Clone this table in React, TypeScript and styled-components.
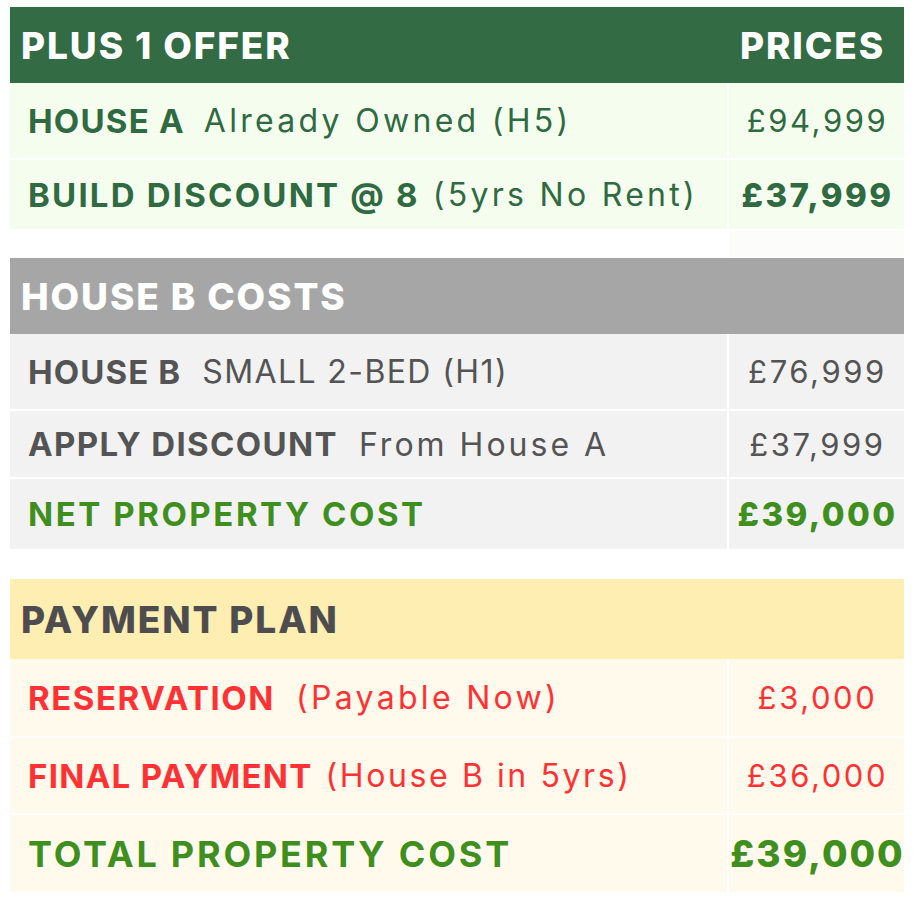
import React from "react";
import styled, { createGlobalStyle } from "styled-components";

type Tone = "green" | "grey" | "yellow";

const tones: Record<Tone, { head: string; headText: string; row: string; text: string }> = {
  green: { head: "#336b44", headText: "#ffffff", row: "#f4fdee", text: "#2f6a41" },
  grey: { head: "#a6a6a6", headText: "#ffffff", row: "#f2f2f2", text: "#545454" },
  yellow: { head: "#feeeb1", headText: "#4d4d4f", row: "#fffaec", text: "#fe3234" },
};

const GlobalStyle = createGlobalStyle`
  html, body {
    margin: 0;
    padding: 0;
    background: #ffffff;
  }
  body {
    font-family: Inter, "Open Sans", sans-serif;
  }
`;

const Page = styled.div`
  width: 894px;
  padding: 7px 10px 0;
  display: flex;
  flex-direction: column;
`;

const Table = styled.section<{ $spaceAfter?: number }>`
  display: grid;
  grid-template-columns: 717px 175px;
  column-gap: 2px;
  row-gap: 2px;
  margin-bottom: ${({ $spaceAfter }) => $spaceAfter ?? 0}px;
`;

const Header = styled.div<{ $tone: Tone; $height: number }>`
  grid-column: 1 / -1;
  height: ${({ $height }) => $height}px;
  margin-bottom: -2px;
  box-sizing: border-box;
  padding: 0 19px 0 11px;
  display: flex;
  align-items: center;
  justify-content: space-between;
  background: ${({ $tone }) => tones[$tone].head};
  color: ${({ $tone }) => tones[$tone].headText};
  font-weight: 800;
  font-size: 37px;
  letter-spacing: 1.9px;
`;

const LabelCell = styled.div<{ $tone: Tone; $height: number; $color?: string }>`
  height: ${({ $height }) => $height}px;
  box-sizing: border-box;
  padding-left: 18px;
  display: flex;
  align-items: center;
  white-space: nowrap;
  background: ${({ $tone }) => tones[$tone].row};
  color: ${({ $tone, $color }) => $color ?? tones[$tone].text};
`;

const PriceCell = styled.div<{ $tone: Tone; $color?: string; $bold?: boolean; $big?: boolean }>`
  display: flex;
  align-items: center;
  justify-content: center;
  padding-left: 2px;
  background: ${({ $tone }) => tones[$tone].row};
  color: ${({ $tone, $color }) => $color ?? tones[$tone].text};
  font-size: ${({ $big, $bold }) => ($big ? 37 : $bold ? 33 : 31)}px;
  font-weight: ${({ $bold }) => ($bold ? 800 : 400)};
  letter-spacing: ${({ $bold, $big }) => ($big ? 2 : $bold ? 2.4 : 2.6)}px;
`;

const Strong = styled.span<{ $big?: boolean; $ls?: number }>`
  font-weight: 700;
  font-size: ${({ $big }) => ($big ? 36 : 33)}px;
  letter-spacing: ${({ $big, $ls }) => $ls ?? ($big ? 2.8 : 2.2)}px;
`;

const Light = styled.span<{ $gap?: number; $ls?: number }>`
  font-weight: 400;
  font-size: 32px;
  letter-spacing: ${({ $ls }) => $ls ?? 3.3}px;
  margin-left: ${({ $gap }) => $gap ?? 19}px;
`;

const BlankLeft = styled.div`
  height: 27px;
`;

const BlankRight = styled.div`
  height: 27px;
  background: #fcfdfb;
`;

const NET_GREEN = "#3f8f1f";

export default function App() {
  return (
    <>
      <GlobalStyle />
      <Page>
        <Table>
          <Header $tone="green" $height={76}>
            <span>PLUS 1 OFFER</span>
            <span>PRICES</span>
          </Header>
          <LabelCell $tone="green" $height={75}>
            <Strong $ls={1.2}>HOUSE A</Strong>
            <Light>Already Owned (H5)</Light>
          </LabelCell>
          <PriceCell $tone="green">£94,999</PriceCell>
          <LabelCell $tone="green" $height={69}>
            <Strong>BUILD DISCOUNT @ 8</Strong>
            <Light $gap={13}>(5yrs No Rent)</Light>
          </LabelCell>
          <PriceCell $tone="green" $bold>
            £37,999
          </PriceCell>
          <BlankLeft />
          <BlankRight />
        </Table>

        <Table $spaceAfter={30}>
          <Header $tone="grey" $height={76}>
            <span>HOUSE B COSTS</span>
          </Header>
          <LabelCell $tone="grey" $height={75}>
            <Strong $ls={1.1}>HOUSE B</Strong>
            <Light $gap={21} $ls={1.4}>
              SMALL 2-BED (H1)
            </Light>
          </LabelCell>
          <PriceCell $tone="grey">£76,999</PriceCell>
          <LabelCell $tone="grey" $height={66}>
            <Strong $ls={1.35}>APPLY DISCOUNT</Strong>
            <Light $gap={21} $ls={3}>
              From House A
            </Light>
          </LabelCell>
          <PriceCell $tone="grey">£37,999</PriceCell>
          <LabelCell $tone="grey" $height={70} $color={NET_GREEN}>
            <Strong $ls={2.55}>NET PROPERTY COST</Strong>
          </LabelCell>
          <PriceCell $tone="grey" $color={NET_GREEN} $bold>
            £39,000
          </PriceCell>
        </Table>

        <Table>
          <Header $tone="yellow" $height={80}>
            <span>PAYMENT PLAN</span>
          </Header>
          <LabelCell $tone="yellow" $height={77}>
            <Strong $ls={1.55}>RESERVATION</Strong>
            <Light $gap={21}>(Payable Now)</Light>
          </LabelCell>
          <PriceCell $tone="yellow">£3,000</PriceCell>
          <LabelCell $tone="yellow" $height={75}>
            <Strong $ls={1.3}>FINAL PAYMENT</Strong>
            <Light $gap={13} $ls={2.6}>
              (House B in 5yrs)
            </Light>
          </LabelCell>
          <PriceCell $tone="yellow">£36,000</PriceCell>
          <LabelCell $tone="yellow" $height={77} $color={NET_GREEN}>
            <Strong $big>TOTAL PROPERTY COST</Strong>
          </LabelCell>
          <PriceCell $tone="yellow" $color={NET_GREEN} $bold $big>
            £39,000
          </PriceCell>
        </Table>
      </Page>
    </>
  );
}
